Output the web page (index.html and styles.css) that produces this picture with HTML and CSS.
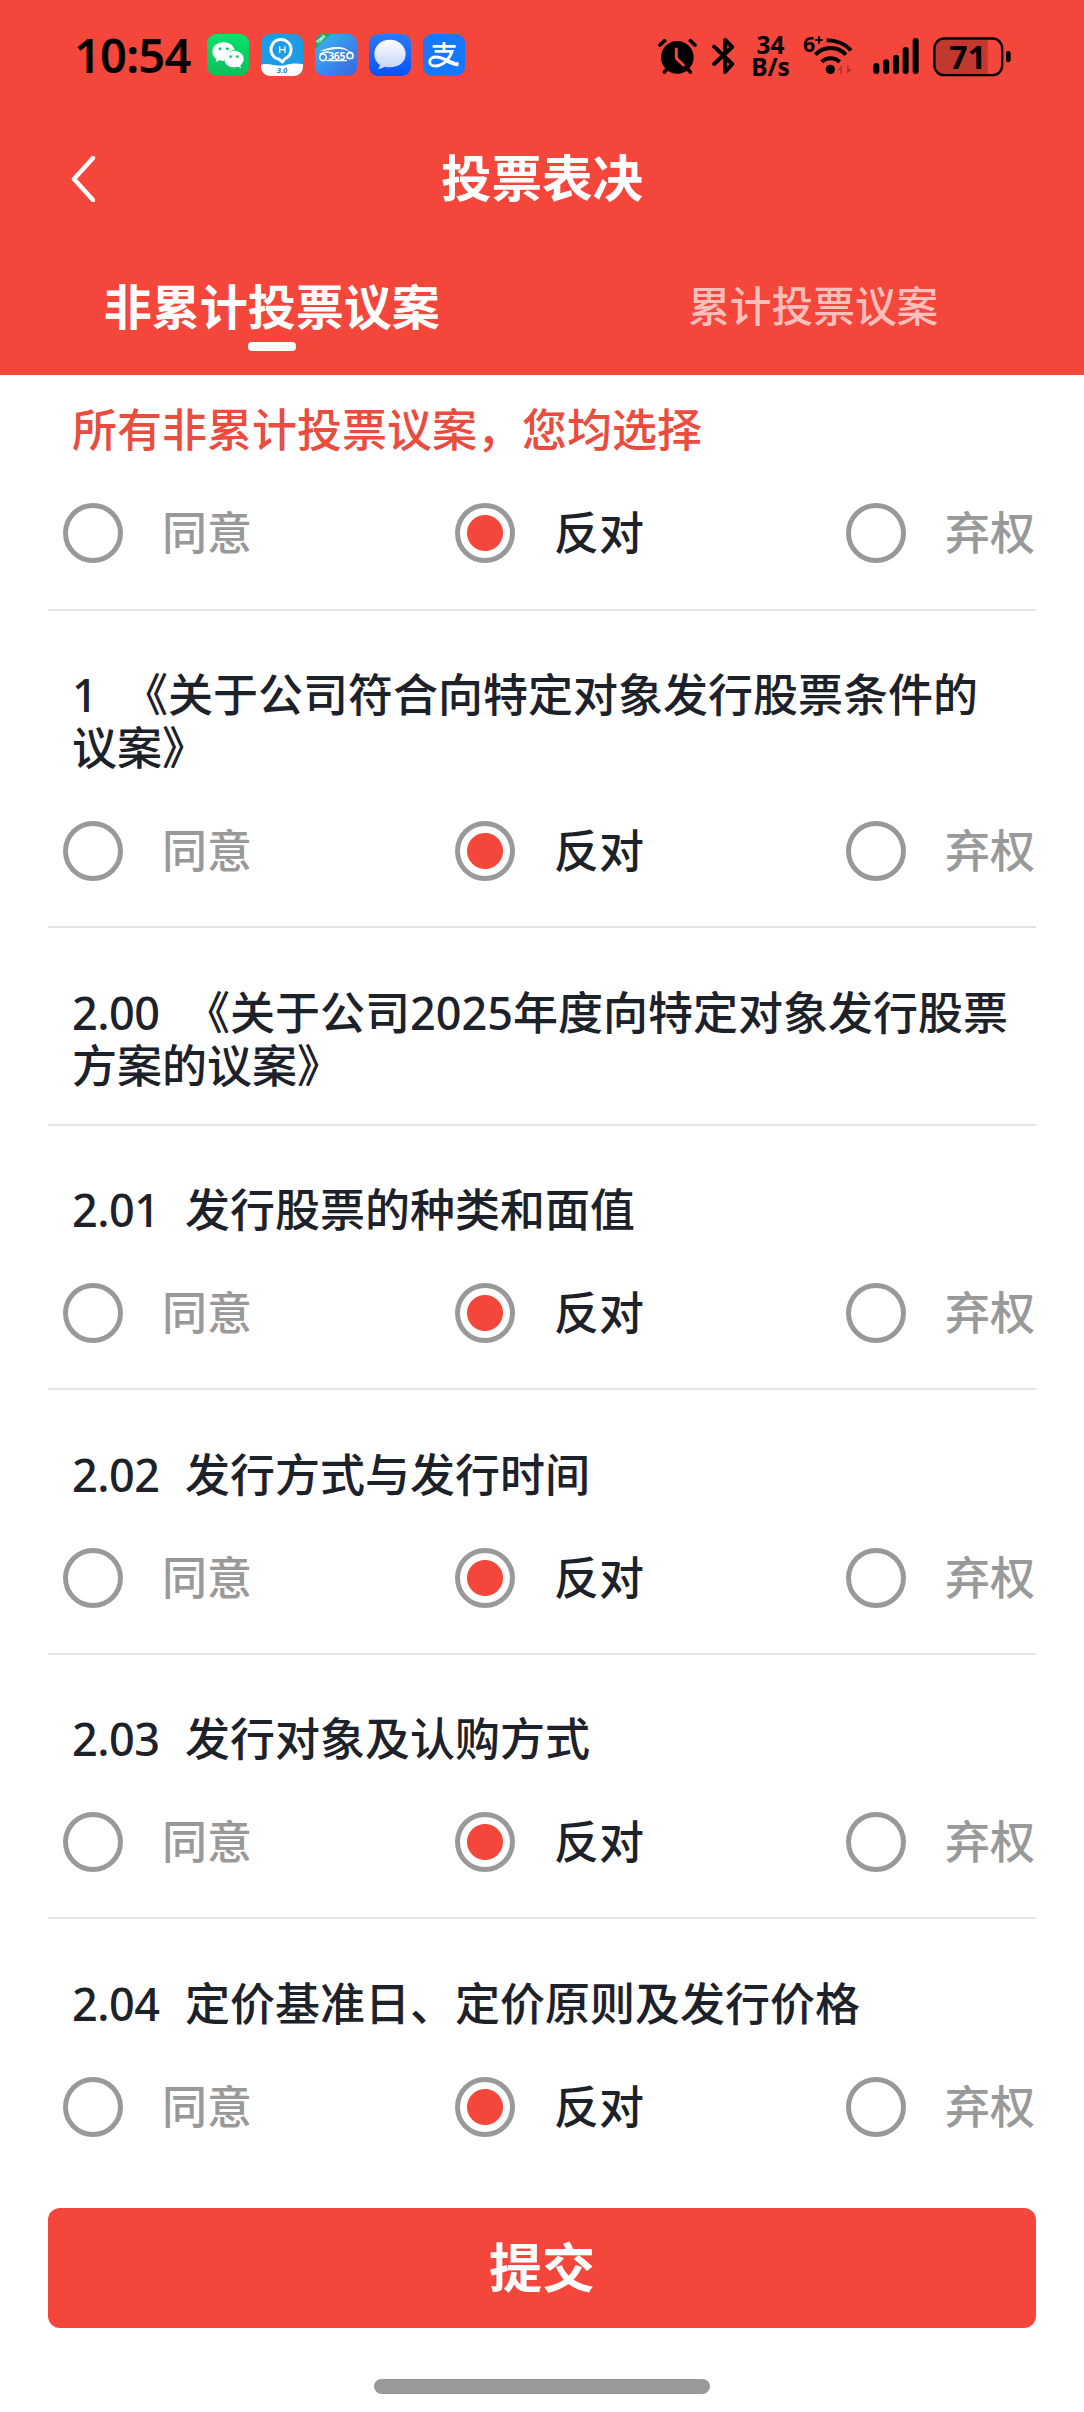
FILE: index.html
```html
<!DOCTYPE html>
<html lang="zh-CN">
<head>
<meta charset="utf-8">
<title>投票表决</title>
<link rel="stylesheet" href="styles.css">
</head>
<body>
<header class="header">
  <div class="status">
    <span class="clock">10:54</span>
    <div class="apps">
      <svg class="app" viewBox="0 0 126 126">
        <defs><linearGradient id="g1" x1="0" y1="0" x2="0" y2="1"><stop offset="0" stop-color="#04e36c"/><stop offset="1" stop-color="#10bd5b"/></linearGradient></defs>
        <rect width="126" height="126" rx="27" fill="url(#g1)"/>
        <path d="M50 25C29 25 16 38 16 53c0 9 5 17 12 22l-2 9 11-5c5 2 10 2 15 2 0-20 14-33 31-33C80 34 66 25 50 25Z" fill="#fff"/>
        <path d="M81 50c-17 0-29 11-29 25s12 25 29 25c4 0 8-1 12-2l9 4-2-8c6-5 10-11 10-19 0-14-12-25-29-25Z" fill="#fff"/>
        <circle cx="39" cy="44" r="4.500" fill="#15ca61"/><circle cx="61" cy="44" r="4.500" fill="#15ca61"/>
        <circle cx="71" cy="68" r="4" fill="#15ca61"/><circle cx="91" cy="68" r="4" fill="#15ca61"/>
      </svg>
      <svg class="app" viewBox="0 0 126 126">
        <defs><clipPath id="c2"><rect width="126" height="126" rx="27"/></clipPath></defs>
        <g clip-path="url(#c2)"><rect width="126" height="126" fill="#1c9be6"/>
        <path d="M0 92c24-8 46 8 70 2 20-5 36-7 56-3v35H0Z" fill="#fff"/>
        <path d="M55 76a30 30 0 1 1 17-2l-8 10Z" fill="none" stroke="#fff" stroke-width="9" stroke-linejoin="round"/>
        <path d="M56 37v20M72 37v20M56 47h16" stroke="#fff" stroke-width="4"/>
        <text x="63" y="118" text-anchor="middle" class="app-version">3.0</text></g>
      </svg>
      <svg class="app" viewBox="0 0 126 126">
        <defs><linearGradient id="g3" x1="0" y1="0" x2="1" y2="1"><stop offset="0" stop-color="#38b7f5"/><stop offset="1" stop-color="#3a64e4"/></linearGradient><clipPath id="c3"><rect width="126" height="126" rx="27"/></clipPath></defs>
        <g clip-path="url(#c3)"><rect width="126" height="126" fill="url(#g3)"/>
        <path d="M0 0h48L0 45Z" fill="#22a46b"/>
        <text x="0" y="0" transform="translate(9 31) rotate(-44)" class="app-ribbon">7080</text>
        <path d="M14 51c20-7 34-14 58-12 16 1 25 8 32 13-18-7-30-9-46-6-16 2-28 6-44 5Z" fill="#fff"/>
        <path d="M34 80h62M14 61c8-6 18-7 29-7M100 54c8 0 14 4 14 14" fill="none" stroke="#fff" stroke-width="4"/>
        <circle cx="24" cy="70" r="10" fill="#3f8ee9" stroke="#fff" stroke-width="5"/><circle cx="105" cy="65" r="9" fill="#3f8ee9" stroke="#fff" stroke-width="5"/>
        <text x="65" y="77" text-anchor="middle" class="app-number">365</text><circle cx="65" cy="70" r="3" fill="#b55264"/></g>
      </svg>
      <svg class="app" viewBox="0 0 126 126">
        <defs><linearGradient id="g4" x1="0" y1="0" x2="0" y2="1"><stop offset="0" stop-color="#2c7af6"/><stop offset="1" stop-color="#0652fa"/></linearGradient><linearGradient id="g4b" x1="0" y1="0" x2="0" y2="1"><stop offset="0" stop-color="#fff"/><stop offset="1" stop-color="#c2d2fb"/></linearGradient></defs>
        <rect width="126" height="126" rx="27" fill="url(#g4)"/>
        <path d="M63 17C36 17 16 35 16 60c0 14 6 26 17 33-1 5-3 8-6 12 9 0 15-4 20-7 5 1 11 2 16 2 27 0 47-16 47-40S90 17 63 17Z" fill="url(#g4b)"/>
      </svg>
      <svg class="app" viewBox="0 0 126 126">
        <rect width="126" height="126" rx="27" fill="#1677ff"/>
        <path d="M29 37h69M63 24v26M35 52h52C79 78 57 96 37 96c-11 0-17-6-17-13 0-9 9-15 20-14 19 1 43 16 66 22" fill="none" stroke="#fff" stroke-width="8.500"/>
        <path d="M75 78c12 6 20 7 31 7v12c-15 0-29-8-39-12Z" fill="#fff"/>
      </svg>
    </div>
    <div class="signals">
      <svg class="alarm" viewBox="0 0 117 108">
        <circle cx="58" cy="58" r="49"/><path d="M19 102l9-9M97 102l-9-9" stroke="#000" stroke-width="11" stroke-linecap="round"/>
        <path d="M6 21 20 8M111 21 97 8" stroke="#000" stroke-width="11" stroke-linecap="round"/>
        <path d="M55 33v28l21 20" fill="none" stroke="#f4463b" stroke-width="9" stroke-linecap="round" stroke-linejoin="round"/>
      </svg>
      <svg class="bluetooth" viewBox="0 0 68 108">
        <path d="M6 26 60 78 39 102V65M6 78 60 27 39 6V44" fill="none" stroke="#000" stroke-width="12" stroke-linecap="round" stroke-linejoin="round"/>
      </svg>
      <div class="speed"><span>34</span><span>B/s</span></div>
      <svg class="wifi" viewBox="0 0 150 120">
        <text x="0" y="50" class="wifi-gen">6</text><path d="M37 15h22M48 4v22" stroke="#000" stroke-width="6"/>
        <path d="M71 16c28 0 54 10 73 30M37 59c25-27 67-27 92 0M56 81c15-15 39-15 54 0" fill="none" stroke="#000" stroke-width="12"/>
        <circle cx="82" cy="103" r="14"/>
        <path d="m103 106 14-16v27h-5v-11ZM147 103l-15 15V90h5v11Z" fill="#b2352e"/>
      </svg>
      <svg class="cell" viewBox="0 0 138 108">
        <path d="M10 84v15M39.500 73v26M69 59v40M98 36v63M128 9v90" stroke="#000" stroke-width="18" stroke-linecap="round"/>
      </svg>
      <svg class="battery" viewBox="0 0 234 120">
        <path d="M32 9h132v102H32Q9 111 9 88V32Q9 9 32 9Z" fill="#c2382f"/>
        <rect x="4.500" y="4.500" width="203" height="110" rx="29" fill="none" stroke="#000" stroke-width="7"/>
        <path d="M226 49v20" stroke="#000" stroke-width="14" stroke-linecap="round"/>
        <text x="104" y="96" text-anchor="middle" class="level">71</text>
      </svg>
    </div>
  </div>
  <div class="navbar">
    <svg class="back" viewBox="0 0 24 46"><path d="M22 2 3 23l19 21" fill="none" stroke="#fff" stroke-width="4.500" stroke-linecap="round" stroke-linejoin="round"/></svg>
    <h1 class="title">投票表决</h1>
  </div>
  <nav class="tabs">
    <div class="tab active">非累计投票议案</div>
    <div class="tab">累计投票议案</div>
  </nav>
</header>
<main class="list">
  <section class="item all">
    <h2 class="name">所有非累计投票议案，您均选择</h2>
    <div class="options"><span class="option">同意</span><span class="option chosen">反对</span><span class="option">弃权</span></div>
  </section>
  <section class="item">
    <h2 class="name"><span class="no short">1</span>《关于公司符合向特定对象发行股票条件的<br>议案》</h2>
    <div class="options"><span class="option">同意</span><span class="option chosen">反对</span><span class="option">弃权</span></div>
  </section>
  <section class="item group">
    <h2 class="name"><span class="no">2.00</span>《关于公司2025年度向特定对象发行股票<br>方案的议案》</h2>
  </section>
  <section class="item">
    <h2 class="name"><span class="no">2.01</span>发行股票的种类和面值</h2>
    <div class="options"><span class="option">同意</span><span class="option chosen">反对</span><span class="option">弃权</span></div>
  </section>
  <section class="item">
    <h2 class="name"><span class="no">2.02</span>发行方式与发行时间</h2>
    <div class="options"><span class="option">同意</span><span class="option chosen">反对</span><span class="option">弃权</span></div>
  </section>
  <section class="item">
    <h2 class="name"><span class="no">2.03</span>发行对象及认购方式</h2>
    <div class="options"><span class="option">同意</span><span class="option chosen">反对</span><span class="option">弃权</span></div>
  </section>
  <section class="item">
    <h2 class="name"><span class="no">2.04</span>定价基准日、定价原则及发行价格</h2>
    <div class="options"><span class="option">同意</span><span class="option chosen">反对</span><span class="option">弃权</span></div>
  </section>
</main>
<footer class="footer">
  <button class="submit">提交</button>
  <div class="home"></div>
</footer>
</body>
</html>
```
FILE: styles.css
```css
*, *::before, *::after { box-sizing: border-box; }
body {
  margin: 0;
  height: 2412px;
  display: flex;
  flex-direction: column;
  background: #fff;
  color: #1c212a;
  font-family: "Noto Sans", "Noto Sans CJK SC", sans-serif;
  overflow: hidden;
}
h1, h2 { margin: 0; font-weight: inherit; }
svg { display: block; flex: none; }

.header { height: 375px; flex: none; background: #f4463b; color: #fff; }
.status { height: 112px; padding: 34px 73px 0 74px; display: flex; align-items: flex-start; color: #000; }
.clock { width: 133px; font-size: 47px; line-height: 42px; font-weight: 600; letter-spacing: -0.8px; white-space: nowrap; }
.apps { display: flex; gap: 12px; }
.app { width: 42px; height: 42px; }
.app-version { font: italic 700 23px "Noto Sans", sans-serif; fill: #2c83b8; }
.app-ribbon { font: 700 14px "Noto Sans", sans-serif; fill: #fff; }
.app-number { font: 700 31px "Noto Sans", sans-serif; fill: #fff; letter-spacing: -1px; }
.signals { margin-left: auto; display: flex; align-items: flex-start; }
.alarm { width: 39px; height: 36px; margin: 4px 15px 0 0; }
.bluetooth { width: 23px; height: 36px; margin: 4px 17px 0 0; }
.speed { width: 37px; margin: 0 14px 0 0; display: flex; flex-direction: column; align-items: center; font-size: 24.500px; line-height: 22px; font-weight: 700; white-space: nowrap; }
.wifi { width: 50px; height: 40px; margin: 1px 20px 0 0; overflow: visible; }
.wifi-gen { font: 700 64px "Noto Sans", sans-serif; }
.cell { width: 46px; height: 36px; margin: 4px 14px 0 0; }
.battery { width: 78px; height: 40px; margin-top: 3px; overflow: visible; }
.level { font: 700 96px "Noto Sans", sans-serif; }

.navbar { height: 134px; padding: 0 71px; display: grid; grid-template-columns: 24px 1fr 24px; align-items: center; }
.back { width: 24px; height: 46px; }
.title { font-size: 50.500px; line-height: 60px; margin-top: -2px; font-weight: 600; text-align: center; }
.tabs { display: grid; grid-template-columns: 1fr 1fr; height: 129px; padding-left: 1px; }
.tab { padding-top: 30px; font-size: 41.700px; line-height: 60px; text-align: center; font-weight: 500; color: rgba(255, 255, 255, .66); }
.tab.active { padding-top: 31px; font-size: 48px; font-weight: 700; color: #fff; }
.tab.active::after { content: ""; display: block; width: 48px; height: 9px; margin: 5px auto 0; border-radius: 4px; background: #fff; }

.list { padding: 0 48px; height: 1833px; flex: none; }
.item { padding: 57.500px 0 45px 24px; border-bottom: 2px solid #e4e4e4; }
.item:last-child { border-bottom: 0; }
.item.all { height: 235.500px; padding-top: 28px; padding-bottom: 0; }
.item.all .name { color: #ea4c40; }
.item.group { padding-bottom: 32px; }
.name { font-size: 45px; line-height: 53px; font-weight: 500; white-space: nowrap; }
.no { display: inline-block; width: 113px; letter-spacing: -0.5px; }
.no.short { width: 51px; }
.options { display: grid; grid-template-columns: 392px 391px 1fr; margin: 47px 0 0 -9px; }
.option { display: flex; align-items: center; height: 60px; padding-bottom: 0; font-size: 45px; line-height: 58px; font-weight: 500; color: #999; white-space: nowrap; }
.option::before { content: ""; width: 60px; height: 60px; margin-right: 39px; border: 5px solid #999; border-radius: 50%; flex: none; }
.option.chosen { color: #1c212a; }
.option.chosen::before { background: radial-gradient(circle, #f4463b 17.500px, #fff 18.500px); }

.footer { padding: 0 48px; display: flex; flex-direction: column; align-items: center; }
.submit { width: 988px; height: 120px; padding: 0 0 5px; border: 0; border-radius: 12px; background: #f4463b; color: #fff; font: 600 53px/115px "Noto Sans CJK SC", sans-serif; }
.home { width: 336px; height: 15px; margin-top: 51px; border-radius: 8px; background: #999; }
```
